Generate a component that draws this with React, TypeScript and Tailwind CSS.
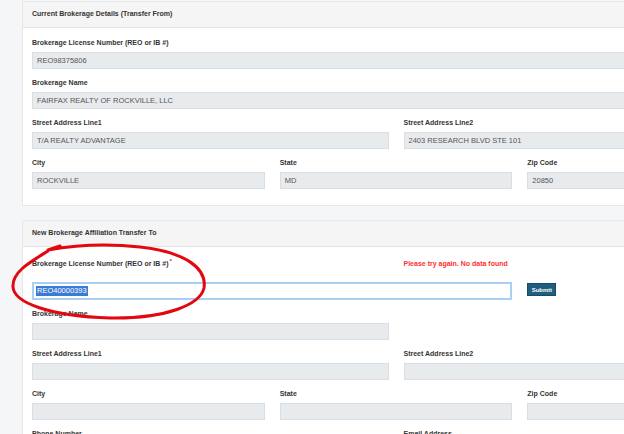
import { ReactNode } from "react";

const font = { fontFamily: '"Liberation Sans", Arial, sans-serif' };

function Label({ children }: { children: ReactNode }) {
  return (
    <div className="h-[10px] leading-[10px] text-[7px] font-bold text-[#333] mb-[4px] whitespace-nowrap">
      {children}
    </div>
  );
}

function Field({ label, value }: { label?: string; value?: string }) {
  return (
    <div>
      {label && <Label>{label}</Label>}
      <div className="h-[17px] bg-[#e8ebee] border border-[#dadee2] flex items-center px-[4px] text-[7.5px] text-[#555] whitespace-nowrap">
        {value}
      </div>
    </div>
  );
}

function Panel({ title, children }: { title: string; children: ReactNode }) {
  return (
    <div className="w-[748px] bg-white border border-[#e6e7e8]">
      <div className="h-[26px] bg-[#f5f5f5] border-b border-[#e3e3e3] flex items-center px-[9px] text-[7px] font-bold text-[#333]">
        {title}
      </div>
      {children}
    </div>
  );
}

export default function App() {
  return (
    <div style={font} className="relative w-[624px] h-[434px] overflow-hidden bg-[#f5f6f7]">
      <div className="pl-[22px] pt-[1px]">
        <Panel title="Current Brokerage Details (Transfer From)">
          <div className="px-[9px] pt-[10px] pb-[16px] flex flex-col gap-[9px]">
            <Field label="Brokerage License Number (REO or IB #)" value="REO98375806" />
            <Field label="Brokerage Name" value="FAIRFAX REALTY OF ROCKVILLE, LLC" />
            <div className="grid grid-cols-2 gap-x-[15px]">
              <Field label="Street Address Line1" value="T/A REALTY ADVANTAGE" />
              <Field label="Street Address Line2" value="2403 RESEARCH BLVD STE 101" />
            </div>
            <div className="grid grid-cols-3 gap-x-[15px]">
              <Field label="City" value="ROCKVILLE" />
              <Field label="State" value="MD" />
              <Field label="Zip Code" value="20850" />
            </div>
          </div>
        </Panel>

        <div className="mt-[14px]">
          <Panel title="New Brokerage Affiliation Transfer To">
            <div className="px-[9px] pt-[12px] flex flex-col gap-[9px]">
              <div>
                <div className="grid grid-cols-2 gap-x-[15px] mb-[13px]">
                  <div className="h-[10px] leading-[10px] text-[7px] font-bold text-[#333] whitespace-nowrap">
                    Brokerage License Number (REO or IB #)
                    <span className="text-[#e02020] text-[6px] relative -top-[3px] ml-[1px]">*</span>
                  </div>
                  <div className="h-[10px] leading-[10px] text-[7px] font-bold text-[#ff3030]">
                    Please try again. No data found
                  </div>
                </div>
                <div className="grid grid-cols-3 gap-x-[15px] items-start">
                  <div className="col-span-2 h-[18px] border-2 border-[#a9cff2] bg-white flex items-center px-[2px] text-[7.5px]">
                    <span className="bg-[#3a7bd5] text-white leading-[10px] px-[1px]">REO40000393</span>
                  </div>
                  <div className="pt-[1px] flex">
                    <button className="block h-[13px] w-[29px] bg-[#1f5e7e] border border-[#174b66] text-white text-[6px] font-bold leading-none">
                      Submit
                    </button>
                  </div>
                </div>
              </div>
              <div className="grid grid-cols-2 gap-x-[15px]">
                <Field label="Brokerage Name" />
              </div>
              <div className="grid grid-cols-2 gap-x-[15px]">
                <Field label="Street Address Line1" />
                <Field label="Street Address Line2" />
              </div>
              <div className="grid grid-cols-3 gap-x-[15px]">
                <Field label="City" />
                <Field label="State" />
                <Field label="Zip Code" />
              </div>
              <div className="grid grid-cols-2 gap-x-[15px]">
                <Field label="Phone Number" />
                <Field label="Email Address" />
              </div>
            </div>
          </Panel>
        </div>
      </div>

      {/* hand drawn red circle over the license field */}
      <svg className="absolute left-0 top-0 pointer-events-none" width="624" height="434" viewBox="0 0 624 434">
        <path
          d="M48 251 C 30 262, 12 272, 13 287 C 14 303, 50 316, 110 318 C 165 319, 200 305, 204 288 C 207 268, 185 252, 140 247 C 105 243, 70 246, 48 250 L 60 246"
          fill="none"
          stroke="#e3080f"
          strokeWidth="3"
          strokeLinecap="round"
          strokeLinejoin="round"
        />
      </svg>
    </div>
  );
}
